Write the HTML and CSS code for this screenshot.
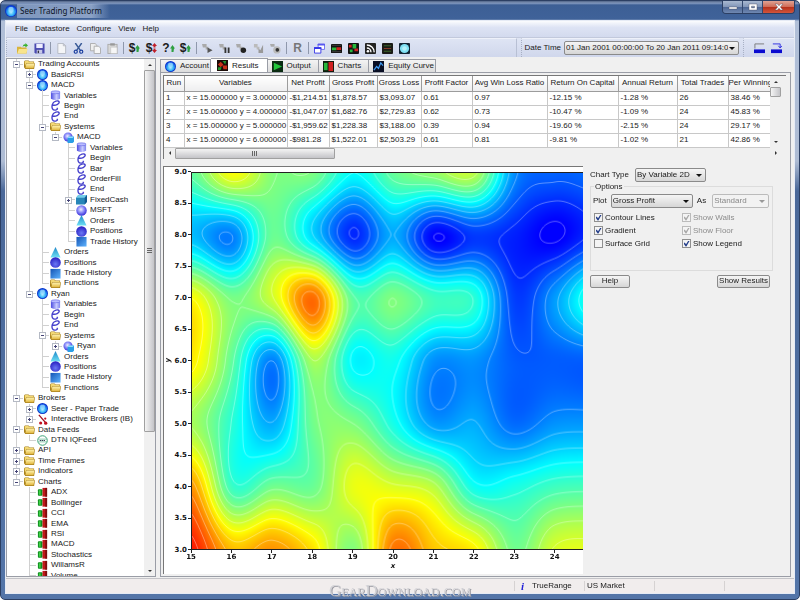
FILE: index.html
```html
<!DOCTYPE html>
<html lang="en">
<head>
    <meta charset="UTF-8">
    <meta name="viewport" content="width=device-width, initial-scale=1.0">
    <title>Seer Trading Platform</title>
    <link rel="stylesheet" href="styles.css">
</head>
<body>

<!-- Icon set -->
<svg width="0" height="0" class="icon-defs" aria-hidden="true">
    <defs>
        <radialGradient id="g-ball" cx="50%" cy="62%" r="60%"><stop offset="0" stop-color="#b4f0ff"/><stop offset=".5" stop-color="#35b4f8"/><stop offset="1" stop-color="#0a3fe0"/></radialGradient>
        <radialGradient id="g-sphere" cx="45%" cy="40%" r="60%"><stop offset="0" stop-color="#eef"/><stop offset=".5" stop-color="#8a8cf8"/><stop offset="1" stop-color="#3a2fd8"/></radialGradient>
        <radialGradient id="g-pos" cx="50%" cy="65%" r="60%"><stop offset="0" stop-color="#6a78f4"/><stop offset="1" stop-color="#2b22c4"/></radialGradient>
        <linearGradient id="g-folder" x1="0" y1="0" x2="0" y2="1"><stop offset="0" stop-color="#fff3b0"/><stop offset="1" stop-color="#e2b840"/></linearGradient>
        <linearGradient id="g-cyl"><stop offset="0" stop-color="#4b4be0"/><stop offset=".6" stop-color="#c9ccff"/><stop offset="1" stop-color="#7f84ee"/></linearGradient>
        <linearGradient id="g-tri" x1="0" y1="0" x2="0" y2="1"><stop offset="0" stop-color="#1c86c8"/><stop offset="1" stop-color="#6fe0f4"/></linearGradient>
        <linearGradient id="g-sq" x1="0" y1="0" x2="1" y2="1"><stop offset="0" stop-color="#1453b4"/><stop offset="1" stop-color="#5fb4ff"/></linearGradient>
    </defs>
    <symbol id="ball" viewBox="0 0 12 12"><circle cx="6" cy="6" r="6" fill="#0b36c8"/><circle cx="6" cy="6" r="5.200" fill="url(#g-ball)"/><rect x="3.500" y="2" width="5" height="5" rx="1.500" fill="#a8e0ff" opacity=".7"/></symbol>
    <symbol id="folder" viewBox="0 0 12 12"><path d="M0 3 1 1.500h4l1 1.200h5V4.500h1L11 10.800H1.400L0 9z" fill="#a8801c"/><path d="M.7 3.200 1.400 2.200h3.300l1 1.200h4.700v1H2.400L1.200 8z" fill="#f3d873"/><path d="M2.600 5h8.800L10.400 10H1.500z" fill="url(#g-folder)"/></symbol>
    <symbol id="cyl" viewBox="0 0 12 12"><path d="M1 2.500v7q5 3 10 0v-7z" fill="url(#g-cyl)"/><ellipse cx="6" cy="2.500" rx="5" ry="1.600" fill="#b9bcff" stroke="#5a5be0" stroke-width=".6"/></symbol>
    <symbol id="script" viewBox="0 0 12 12"><path d="M3 5.500C6 6.500 10.500 4.200 10 2 9.500 0 3.500 1 2.500 5 1.500 9 3 11.500 6 11 8 10.500 8.500 9.400 7.800 9" fill="none" stroke="#4540cc" stroke-width="1.500" stroke-linecap="round"/></symbol>
    <symbol id="system" viewBox="0 0 12 12"><circle cx="5.500" cy="5.500" r="5" fill="url(#g-sphere)"/><path d="M5 6.500 6.500 5H12v5.500L10.500 12H5z" fill="#2a9fe6"/><path d="M5 6.500 6.500 5H12l-1.500 1.500z" fill="#8fdcff"/></symbol>
    <symbol id="cube" viewBox="0 0 12 12"><path d="M0 4 2.500 1H12v7.500L9.500 11.500H0z" fill="#2786b8"/><path d="M0 4 2.500 1H12L9.500 4z" fill="#74cdea"/><path d="M9.500 4 12 1v7.500L9.500 11.500z" fill="#115b90"/></symbol>
    <symbol id="sphere" viewBox="0 0 12 12"><circle cx="6" cy="6" r="5.700" fill="url(#g-sphere)"/></symbol>
    <symbol id="orders" viewBox="0 0 12 12"><path d="M6 0 11.500 11.500H.5z" fill="url(#g-tri)"/></symbol>
    <symbol id="positions" viewBox="0 0 12 12"><circle cx="6" cy="6" r="5.800" fill="url(#g-pos)"/></symbol>
    <symbol id="history" viewBox="0 0 12 12"><rect x=".5" y="1" width="11" height="10.500" fill="url(#g-sq)"/></symbol>
    <symbol id="bars" viewBox="0 0 12 12"><rect x="1" y="2.500" width="5" height="7" rx="1" fill="#0c8a1c"/><rect x="2" y="3.500" width="2" height="5" fill="#3fd046"/><rect x="6" y="1" width="5" height="9.500" fill="#c01818"/><rect x="9" y="1" width="2" height="9.500" fill="#7c0c0c"/></symbol>
    <symbol id="ib" viewBox="0 0 12 12"><path d="M2 1 9 9" stroke="#a01020" stroke-width="1.300"/><circle cx="9.500" cy="10" r="1.800" fill="#c01020"/><circle cx="4" cy="9.800" r="1.700" fill="#c01020"/><circle cx="9" cy="5" r="1.200" fill="#c01020"/></symbol>
    <symbol id="dtn" viewBox="0 0 12 12"><circle cx="6" cy="6" r="5.200" fill="#fff" stroke="#2c9a6c"/><path d="M1.500 4.500h9M1.500 7.500h9" stroke="#2c9a6c" stroke-width=".6"/><path d="M3 6h6" stroke="#345" stroke-width="1.200" stroke-dasharray="1.500 .6"/></symbol>

    <symbol id="open" viewBox="0 0 12 12"><path d="M0 4h4l1 1h5.500v6.500H0z" fill="#d9b43c"/><path d="M2 6.500h9.800L10 11.500H.3z" fill="#f8e48c"/><path d="M6 4q1-3 3.200-2.500V0L12 2.800 9.200 5V3.500Q7.500 3 6 4z" fill="#39b02e"/></symbol>
    <symbol id="save" viewBox="0 0 12 12"><path d="M.5.500h11v11h-10l-1-1z" fill="#4a4ab0"/><rect x="2.500" y="1" width="7" height="4.500" fill="#eef"/><rect x="3" y="7.500" width="6" height="4" fill="#c8cae8"/><rect x="4" y="8.300" width="1.500" height="2.700" fill="#334"/></symbol>
    <symbol id="new" viewBox="0 0 12 12"><path d="M2 .5h6l2.500 2.500v8.500H2z" fill="#f4f5f7" stroke="#b4b8c2"/><path d="M8 .5v2.500h2.500" fill="none" stroke="#b4b8c2"/></symbol>
    <symbol id="cut" viewBox="0 0 12 12"><path d="M2.500 0 8 8M9.500 0 4 8" stroke="#3b5c98" stroke-width="1.600"/><circle cx="3" cy="9.500" r="1.700" fill="none" stroke="#1c3fa0" stroke-width="1.300"/><circle cx="9" cy="9.500" r="1.700" fill="none" stroke="#1c3fa0" stroke-width="1.300"/></symbol>
    <symbol id="copy" viewBox="0 0 12 12"><path d="M.5.500h5l2 2v6h-7z" fill="#eee" stroke="#aaa"/><path d="M4.500 3.500h5l2 2v6h-7z" fill="#f6f6f6" stroke="#aaa"/></symbol>
    <symbol id="paste" viewBox="0 0 12 12"><rect x="1" y="1.500" width="10" height="10" fill="#d8d8d8" stroke="#aaa"/><rect x="3.500" y=".3" width="5" height="2.500" fill="#999"/><path d="M4 4.500h7v7H4z" fill="#f6f6f6" stroke="#bbb" stroke-width=".6"/></symbol>
    <symbol id="up" viewBox="0 0 5 10"><path d="M1.500 9V5.500H0L2.500 2 5 5.500H4L3.500 9z" fill="#2fa042"/></symbol>
    <symbol id="updown" viewBox="0 0 5 10"><path d="M2.500 0 5 3H3.500v1.500H1.500V3H0zM2.500 10 0 7h1.500V5.500h2V7H5z" fill="#c0202a"/></symbol>
    <symbol id="run" viewBox="0 0 12 12"><path d="M0 1h5v3h2v3H4V5H1z" fill="#aaa"/><path d="M6 5l5.500 3L6 11z" fill="#555"/></symbol>
    <symbol id="pause" viewBox="0 0 12 12"><path d="M0 1h5v3h2v3H4V5H1z" fill="#aaa"/><path d="M6 5h2v6H6zM9.500 5h2v6h-2z" fill="#333"/></symbol>
    <symbol id="record" viewBox="0 0 12 12"><path d="M0 1h5v3h2v3H4V5H1z" fill="#aaa"/><circle cx="8" cy="8" r="3" fill="#222"/></symbol>
    <symbol id="edit" viewBox="0 0 12 12"><path d="M1 1h4v3h2v3H4V5H1z" fill="#bbb"/><path d="M6 11V6l2 2 3-6v9z" fill="#999"/></symbol>
    <symbol id="gear" viewBox="0 0 12 12"><path d="M0 1h5v3H1z" fill="#aaa"/><circle cx="7.500" cy="7.500" r="4" fill="#bbb"/><circle cx="8" cy="7.500" r="2" fill="#333"/></symbol>
    <symbol id="windows" viewBox="0 0 12 12"><path d="M4.500 1h7v6h-7z" fill="#fff" stroke="#6a6af0"/><path d="M4 1h8v1.600H4z" fill="#5858f0"/><path d="M.5 5h7v6h-7z" fill="#fff" stroke="#3434e8"/><path d="M0 4.500h8V6.500H0z" fill="#3434e8"/></symbol>
    <symbol id="t-orders" viewBox="0 0 12 12"><rect y="1" width="12" height="10" rx="1" fill="#111"/><path d="M1 5h5v3H1z" fill="#27b83a"/><path d="M6 4.500h5v3H6z" fill="#d02222"/><path d="M1 2.500h10M1 9.500h10" stroke="#444"/></symbol>
    <symbol id="t-heat" viewBox="0 0 12 12"><rect width="12" height="12" rx="1" fill="#111"/><path d="M1 2h3v3H1zM7 6h4v3H7z" fill="#d02222"/><path d="M5 1h4v5H5zM2 7h3v3H2z" fill="#27b83a"/></symbol>
    <symbol id="t-feed" viewBox="0 0 12 12"><rect width="12" height="12" rx="1" fill="#222"/><circle cx="3.200" cy="9" r="1.400" fill="#fff"/><path d="M2 5.500A4.500 4.500 0 0 1 6.500 10M2 2.200A8 8 0 0 1 10 10" fill="none" stroke="#fff" stroke-width="1.500"/></symbol>
    <symbol id="t-list" viewBox="0 0 12 12"><rect width="12" height="12" rx="1" fill="#1a1a16"/><path d="M2 3h8M2 9h8" stroke="#3c6c2c"/><path d="M2 6h8" stroke="#8c3c2c"/></symbol>
    <symbol id="t-globe" viewBox="0 0 12 12"><rect width="12" height="12" rx="1" fill="#123"/><circle cx="6" cy="6" r="5" fill="#7fe0f4"/><circle cx="6" cy="6" r="2.500" fill="#b4f0fa"/></symbol>
    <symbol id="t-results" viewBox="0 0 12 12"><rect width="12" height="12" fill="#1c0c08"/><path d="M1 5 4 2l3 3-3 3zM6 6h5v4H7z" fill="#c8321c"/><path d="M6 1h4l-1 4zM1 8h4l-1 3H1z" fill="#22962e"/></symbol>
    <symbol id="t-output" viewBox="0 0 12 12"><rect width="12" height="12" fill="#0b2c12"/><path d="M2 2l9 4-9 4z" fill="#22c63a"/></symbol>
    <symbol id="t-charts" viewBox="0 0 12 12"><rect width="12" height="12" fill="#0b1c0c"/><rect x="1" y="2" width="4" height="8" fill="#27b83a"/><rect x="6" y="1" width="5" height="10" fill="#d02020"/></symbol>
    <symbol id="t-equity" viewBox="0 0 12 12"><rect width="12" height="12" fill="#0a0f24"/><path d="M1 10 4 6l2 2 2.500-6L11 5" fill="none" stroke="#3f9cf4" stroke-width="1.300"/></symbol>
    <symbol id="dock-down" viewBox="0 0 12 12"><path d="M1 6V1h10" fill="none" stroke="#777"/><rect x="0" y="7" width="12" height="4" fill="#0a0ad0"/></symbol>
    <symbol id="dock-right" viewBox="0 0 12 12"><path d="M2 1h8v4M8 3l2 2.500L12 3" fill="none" stroke="#2a2ae0"/><rect x="0" y="7" width="12" height="4" fill="#0a0ad0"/></symbol>
</svg>

<div class="window">
    <header class="title-bar">
        <svg class="app-icon"><use href="#ball"/></svg>
        <h1>Seer Trading Platform</h1>
        <div class="window-buttons">
            <button aria-label="Minimize"><svg viewBox="0 0 10 8"><path d="M1 4h8v2H1z"/></svg></button>
            <button aria-label="Maximize"><svg viewBox="0 0 10 8"><path d="M1 1h8v6H1zM3.500 3.200v1.600h3V3.200z" fill-rule="evenodd"/></svg></button>
            <button class="close" aria-label="Close"><svg viewBox="0 0 10 8"><path d="M1 1h2.500L5 2.800 6.500 1H9L6.300 4 9 7H6.500L5 5.200 3.500 7H1l2.700-3z"/></svg></button>
        </div>
    </header>

    <div class="client">
        <nav class="menu-bar">
            <a href="#">File</a>
            <a href="#">Datastore</a>
            <a href="#">Configure</a>
            <a href="#">View</a>
            <a href="#">Help</a>
        </nav>

        <div class="toolbar">
            <div class="tools">
                <button aria-label="Open"><svg><use href="#open"/></svg></button>
                <button aria-label="Save"><svg><use href="#save"/></svg></button>
                <span class="sep"></span>
                <button aria-label="New"><svg><use href="#new"/></svg></button>
                <button aria-label="Cut"><svg><use href="#cut"/></svg></button>
                <button aria-label="Copy"><svg><use href="#copy"/></svg></button>
                <button aria-label="Paste"><svg><use href="#paste"/></svg></button>
                <span class="sep"></span>
                <button class="glyph">$<svg><use href="#up"/></svg></button>
                <button class="glyph">$<svg><use href="#updown"/></svg></button>
                <button class="glyph">?<svg><use href="#up"/></svg></button>
                <button class="glyph">$<svg><use href="#up"/></svg></button>
                <span class="sep"></span>
                <button aria-label="Run"><svg><use href="#run"/></svg></button>
                <button aria-label="Pause"><svg><use href="#pause"/></svg></button>
                <button aria-label="Stop"><svg><use href="#record"/></svg></button>
                <button aria-label="Edit"><svg><use href="#edit"/></svg></button>
                <button aria-label="Settings"><svg><use href="#gear"/></svg></button>
                <span class="sep"></span>
                <button class="glyph grey">R</button>
                <span class="sep"></span>
                <button aria-label="Windows"><svg><use href="#windows"/></svg></button>
                <button aria-label="Order book"><svg><use href="#t-orders"/></svg></button>
                <button aria-label="Heat map"><svg><use href="#t-heat"/></svg></button>
                <button aria-label="Feed"><svg><use href="#t-feed"/></svg></button>
                <button aria-label="Watch list"><svg><use href="#t-list"/></svg></button>
                <button aria-label="Web"><svg><use href="#t-globe"/></svg></button>
            </div>
            <div class="tools dates">
                <label for="date-range">Date Time</label>
                <span class="select"><select id="date-range"><option>01 Jan 2001 00:00:00 To 20 Jan 2011 09:14:00</option></select></span>
            </div>
            <div class="tools dock">
                <button aria-label="Dock below"><svg><use href="#dock-down"/></svg></button>
                <button aria-label="Dock right"><svg><use href="#dock-right"/></svg></button>
            </div>
        </div>

        <main class="workspace">
            <aside class="tree-panel">
                <ul class="tree" id="tree"></ul>
                <div class="scroll-v">
                    <span class="arrow up"></span>
                    <span class="thumb grip"></span>
                    <span class="rest"></span>
                    <span class="arrow down"></span>
                </div>
            </aside>

            <section class="content">
                <div class="tabs">
                    <button><svg><use href="#ball"/></svg>Account</button>
                    <button class="active"><svg><use href="#t-results"/></svg>Results</button>
                    <button><svg><use href="#t-output"/></svg>Output</button>
                    <button><svg><use href="#t-charts"/></svg>Charts</button>
                    <button><svg><use href="#t-equity"/></svg>Equity Curve</button>
                </div>

                <div class="page">
                    <div class="results">
                        <div class="results-top">
                            <div class="table-clip">
                                <table>
                                    <colgroup>
                                        <col class="c-run"><col class="c-var"><col class="c-net"><col class="c-gp"><col class="c-gl"><col class="c-pf"><col class="c-avg"><col class="c-roc"><col class="c-ann"><col class="c-tot"><col>
                                    </colgroup>
                                    <thead>
                                        <tr><th>Run</th><th>Variables</th><th>Net Profit</th><th>Gross Profit</th><th>Gross Loss</th><th>Profit Factor</th><th>Avg Win Loss Ratio</th><th>Return On Capital</th><th>Annual Return</th><th>Total Trades</th><th>Per Winning</th></tr>
                                    </thead>
                                    <tbody>
                                        <tr><td>1</td><td>x = 15.000000 y = 3.000000</td><td>-$1,214.51</td><td>$1,878.57</td><td>$3,093.07</td><td>0.61</td><td>0.97</td><td>-12.15 %</td><td>-1.28 %</td><td>26</td><td>38.46 %</td></tr>
                                        <tr><td>2</td><td>x = 15.000000 y = 4.000000</td><td>-$1,047.07</td><td>$1,682.76</td><td>$2,729.83</td><td>0.62</td><td>0.73</td><td>-10.47 %</td><td>-1.09 %</td><td>24</td><td>45.83 %</td></tr>
                                        <tr><td>3</td><td>x = 15.000000 y = 5.000000</td><td>-$1,959.62</td><td>$1,228.38</td><td>$3,188.00</td><td>0.39</td><td>0.94</td><td>-19.60 %</td><td>-2.15 %</td><td>24</td><td>29.17 %</td></tr>
                                        <tr><td>4</td><td>x = 15.000000 y = 6.000000</td><td>-$981.28</td><td>$1,522.01</td><td>$2,503.29</td><td>0.61</td><td>0.81</td><td>-9.81 %</td><td>-1.02 %</td><td>21</td><td>42.86 %</td></tr>
                                    </tbody>
                                </table>
                            </div>
                            <div class="scroll-v">
                                <span class="arrow up"></span>
                                <span class="thumb"></span>
                                <span class="rest"></span>
                                <span class="arrow down"></span>
                            </div>
                        </div>
                        <div class="scroll-h">
                            <span class="arrow left"></span>
                            <span class="thumb grip"></span>
                            <span class="rest"></span>
                            <span class="arrow right"></span>
                        </div>
                    </div>

                    <div class="lower">
                        <div class="chart">
                            <div class="y-title">y</div>
                            <div class="y-axis" id="y-axis"></div>
                            <canvas id="plot" width="392" height="378"></canvas>
                            <div class="x-axis" id="x-axis"></div>
                            <div class="x-title">x</div>
                        </div>

                        <form class="options">
                            <div class="line">
                                <label for="chart-type">Chart Type</label>
                                <span class="select type"><select id="chart-type"><option>By Variable 2D</option></select></span>
                            </div>
                            <fieldset>
                                <legend>Options</legend>
                                <div class="line">
                                    <label for="plot-field">Plot</label>
                                    <span class="select field"><select id="plot-field"><option>Gross Profit</option></select></span>
                                    <label for="plot-as">As</label>
                                    <span class="select as"><select id="plot-as" disabled><option>Standard</option></select></span>
                                </div>
                                <div class="checks">
                                    <label><input type="checkbox" checked>Contour Lines</label>
                                    <label class="off"><input type="checkbox" checked disabled>Show Walls</label>
                                    <label><input type="checkbox" checked>Gradient</label>
                                    <label class="off"><input type="checkbox" checked disabled>Show Floor</label>
                                    <label><input type="checkbox">Surface Grid</label>
                                    <label><input type="checkbox" checked>Show Legend</label>
                                </div>
                            </fieldset>
                            <div class="actions">
                                <button type="button">Help</button>
                                <button type="button">Show Results</button>
                            </div>
                        </form>
                    </div>
                </div>
            </section>
        </main>

        <footer class="status-bar">
            <span class="info"><b>i</b>TrueRange</span>
            <span class="market">US Market</span>
            <span class="blank"></span>
            <span class="blank"></span>
        </footer>
    </div>
    <div class="watermark">GearDownload.com</div>
</div>

<script src="script.js"></script>
</body>
</html>
```
FILE: styles.css
```css
* {
    box-sizing: border-box;
}

body {
    margin: 0;
    background: #fff;
    font-family: "Liberation Sans", Arial, sans-serif;
    font-size: 8px;
    line-height: 10px;
    color: #1a1a1a;
}

button, select, input {
    font: inherit;
    color: inherit;
    margin: 0;
    padding: 0;
}

button {
    border: none;
    background: none;
}

.icon-defs {
    position: absolute;
}

/* Window frame */
.window {
    position: relative;
    display: flex;
    flex-direction: column;
    height: 100vh;
    padding: 0 4px 5px;
    overflow: hidden;
    background: linear-gradient(#5d7194 0, #5d7194 1px, #8a9fc4 2px, #3d5f95 4px, #3f6299 18px, #b0bfd8 20px, #aebcd4 160px, #4a6899 190px, #5475a8 100%);
    border: 1px solid #2c3f63;
    border-radius: 5px;
}

.title-bar {
    display: flex;
    align-items: center;
    height: 19px;
    flex: none;
}

.app-icon {
    width: 12px;
    height: 12px;
}

.title-bar h1 {
    margin: 0;
    padding: 0 8px 0 3px;
    font: 8px/14px "Noto Sans", sans-serif;
    color: #0c1424;
    background: linear-gradient(90deg, rgba(190, 204, 228, .5), rgba(190, 204, 228, .6) 80%, transparent);
}

.window-buttons {
    display: flex;
    align-self: flex-start;
    margin-left: auto;
    border: 1px solid #2c3f63;
    border-top: none;
    border-radius: 0 0 4px 4px;
    overflow: hidden;
}

.window-buttons button {
    width: 20px;
    height: 12px;
    background: linear-gradient(#a9b8d0, #8195b8 50%, #4d6694 51%, #6f88b2);
    border-right: 1px solid #33486e;
}

.window-buttons .close {
    width: 31px;
    background: linear-gradient(#e0a393, #cf6a55 50%, #b5301a 51%, #d2553c);
    border: none;
}

.window-buttons svg {
    display: block;
    width: 10px;
    height: 8px;
    margin: auto;
    fill: #fff;
    stroke: #445;
    stroke-width: .4;
}

.client {
    flex: 1;
    min-height: 0;
    display: flex;
    flex-direction: column;
    background: #f0f0f0;
    border: 1px solid #e6ebf5;
}

/* Menu and toolbar */
.menu-bar {
    display: flex;
    gap: 7px;
    height: 17px;
    flex: none;
    align-items: center;
    padding-left: 9px;
    background: linear-gradient(#fbfcfe, #dde3f4 40%, #d3daee);
    border-bottom: 1px solid #c2c9dc;
}

.menu-bar a {
    color: #1a1a1a;
    text-decoration: none;
}

.toolbar {
    display: flex;
    height: 19px;
    flex: none;
    background: linear-gradient(#dfe5f4, #d0d7ec);
    gap: 4px;
}

.tools {
    display: flex;
    align-items: center;
    padding-left: 7px;
    border-left: 1px dotted #a8b0c4;
    border-top: 1px solid #eef1fa;
}

.tools:first-child {
    flex: 1;
    padding-left: 7px;
    border-right: 1px solid #b8c0d4;
}

.tools button {
    width: 17px;
    height: 16px;
    display: flex;
    align-items: center;
    justify-content: center;
}

.tools svg {
    width: 11px;
    height: 11px;
}

.tools .glyph {
    font: bold 12px/12px "Liberation Sans", sans-serif;
}

.tools .glyph svg {
    width: 5px;
    height: 10px;
}

.tools .grey {
    color: #777;
}

.sep {
    width: 1px;
    height: 12px;
    margin: 0 2px;
    background: #8f98ac;
}

.dates {
    gap: 3px;
    padding-left: 3px;
}

.dates .select {
    width: 175px;
}

.dates select {
    padding-right: 10px;
}

.dock {
    width: 51px;
}

/* Drop-downs */
.select {
    position: relative;
    display: block;
}

.select select {
    display: block;
    width: 100%;
    height: 14px;
    padding: 0 10px 0 1px;
    appearance: none;
    white-space: nowrap;
    background: linear-gradient(#f5f5f5, #e6e6e6 50%, #d6d6d6);
    border: 1px solid #8a8a8a;
    border-radius: 2px;
}

.select::after {
    content: "";
    position: absolute;
    right: 4px;
    top: 6px;
    border: 3px solid transparent;
    border-top-color: #111;
    border-bottom: none;
    pointer-events: none;
}

.select select:disabled {
    color: #888;
    background: #f2f2f2;
    border-color: #bbb;
    opacity: 1;
}

.select.as::after {
    border-top-color: #999;
}

/* Tree */
.workspace {
    flex: 1;
    min-height: 0;
    display: flex;
    gap: 4px;
    padding: 1px 0;
}

.tree-panel {
    display: flex;
    width: 150px;
    flex: none;
    background: #fff;
    border: 1px solid #9a9da6;
    overflow: hidden;
}

.tree {
    flex: 1;
    min-width: 0;
    list-style: none;
    margin: 0 0 -5px;
    padding: 0 0 0 3px;
    display: grid;
    grid-auto-rows: minmax(0, 1fr);
}

.tree li {
    display: flex;
    align-items: center;
    white-space: nowrap;
}

.tree i {
    position: relative;
    align-self: stretch;
    width: 13px;
    flex: none;
}

.tree i.pass {
    background: linear-gradient(#d0d0d0, #d0d0d0) 6px 0 / 1px 100% no-repeat;
}

.tree i.tee {
    background: linear-gradient(#d0d0d0, #d0d0d0) 6px 0 / 1px 100% no-repeat, linear-gradient(#d0d0d0, #d0d0d0) 6px 50% / 7px 1px no-repeat;
}

.tree i.end {
    background: linear-gradient(#d0d0d0, #d0d0d0) 6px 0 / 1px 50% no-repeat, linear-gradient(#d0d0d0, #d0d0d0) 6px 50% / 7px 1px no-repeat;
}

.tree .toggle {
    position: absolute;
    left: 3px;
    top: 2px;
    width: 7px;
    height: 7px;
    border: 1px solid #b4b9c4;
    background: linear-gradient(#447, #447) center / 3px 1px no-repeat, #fff;
}

.tree .toggle.closed {
    background: linear-gradient(#447, #447) center / 3px 1px no-repeat, linear-gradient(#447, #447) center / 1px 3px no-repeat, #fff;
}

.tree svg {
    width: 11px;
    height: 11px;
    flex: none;
    margin: 0 3px 0 1px;
}

/* Scroll bars */
.scroll-v, .scroll-h {
    display: flex;
    flex: none;
    background: #f0f0f0;
}

.scroll-v {
    flex-direction: column;
    width: 11px;
}

.scroll-h {
    height: 11px;
}

.arrow {
    width: 11px;
    height: 11px;
    display: grid;
    place-items: center;
}

.arrow::before {
    content: "";
    border: 2px solid transparent;
}

.arrow.up::before { border-bottom-color: #333; border-top: none; }
.arrow.down::before { border-top-color: #333; border-bottom: none; }
.arrow.left::before { border-right-color: #333; border-left: none; }
.arrow.right::before { border-left-color: #333; border-right: none; }

.thumb {
    display: grid;
    place-items: center;
    border: 1px solid #a0a0a0;
    border-radius: 1px;
    background: linear-gradient(90deg, #f4f4f4, #dcdcde 50%, #c4c4c8);
}

.scroll-h .thumb {
    background: linear-gradient(#f4f4f4, #dcdcde 50%, #c4c4c8);
    flex: 156;
}

.scroll-h .rest {
    flex: 430;
}

.tree-panel .thumb {
    flex: 362;
}

.tree-panel .rest {
    flex: 134;
}

.results .scroll-v .thumb {
    height: 10px;
}

.results .scroll-v .rest {
    flex: 1;
}

.grip::before {
    content: "";
    width: 5px;
    height: 5px;
    background: repeating-linear-gradient(#666 0, #666 1px, transparent 1px, transparent 2px);
}

.scroll-h .grip::before {
    background: repeating-linear-gradient(90deg, #666 0, #666 1px, transparent 1px, transparent 2px);
}

/* Tabs */
.content {
    flex: 1;
    min-width: 0;
    display: flex;
    flex-direction: column;
}

.tabs {
    display: flex;
    align-items: flex-end;
    height: 14px;
    flex: none;
}

.tabs button {
    display: flex;
    align-items: center;
    gap: 4px;
    height: 13px;
    padding: 0 1px 0 4px;
    background: linear-gradient(#f4f4f4, #dcdcdc);
    border: 1px solid #9a9da6;
    border-bottom: none;
    border-left: none;
    white-space: nowrap;
}

.tabs button:first-child {
    border-left: 1px solid #9a9da6;
}

.tabs button.active {
    height: 14px;
    padding: 0 8px 0 6px;
    background: #fff;
}

.tabs button:nth-child(3), .tabs button:nth-child(4) {
    padding-right: 7px;
}

.tabs svg {
    width: 11px;
    height: 11px;
}

.page {
    flex: 1;
    min-height: 0;
    display: flex;
    flex-direction: column;
    gap: 7px;
    padding: 2px 4px 2px 2px;
    margin-right: 3px;
    border: 1px solid #9a9da6;
}

/* Results table */
.results {
    padding-right: 5px;
    border-top: 1px solid #777;
    border-left: 1px solid #777;
}

.results-top {
    display: flex;
    background: #fff;
}

.table-clip {
    flex: 1;
    min-width: 0;
    overflow: hidden;
}

table {
    width: 100%;
    table-layout: fixed;
    border-collapse: collapse;
}

th, td {
    padding: 0 1px 0 2px;
    white-space: nowrap;
    overflow: hidden;
    border-right: 1px solid #c8c8c8;
    border-bottom: 1px solid #c8c8c8;
    text-align: left;
    font-weight: normal;
    height: 14px;
}

th {
    height: 15px;
    padding: 0;
    text-align: center;
    background: linear-gradient(#fff, #eeeeef);
    border-color: #9c9c9c;
}

th:last-child, td:last-child {
    border-right: none;
}

.c-run { width: 20px; }
.c-var { width: 103px; }
.c-net { width: 42px; }
.c-gp { width: 48px; }
.c-gl { width: 44px; }
.c-pf { width: 51px; }
.c-avg { width: 75px; }
.c-roc { width: 71px; }
.c-ann { width: 59px; }
.c-tot { width: 51px; }

/* Contour chart */
.lower {
    flex: 1;
    min-height: 0;
    display: flex;
    gap: 7px;
}

.chart {
    flex: 1;
    min-width: 0;
    display: grid;
    grid-template-columns: 5px 22px 1fr;
    grid-template-rows: 1fr 12px 12px;
    padding: 5px 0 0;
    background: #fff;
    border-top: 1px solid #777;
    border-left: 1px solid #777;
    font: bold 7px/8px "DejaVu Sans", sans-serif;
    color: #111;
}

.chart canvas {
    width: 100%;
    height: 100%;
    min-height: 0;
    border-left: 1px solid #222;
    border-top: 1px solid #222;
    border-bottom: 1px solid #222;
}

.y-title {
    align-self: center;
    font-style: italic;
    writing-mode: vertical-rl;
    transform: rotate(180deg);
}

.x-title {
    grid-column: 3;
    padding-left: 12px;
    text-align: center;
    font-style: italic;
}

.y-axis {
    display: flex;
    flex-direction: column;
    justify-content: space-between;
    margin: -4px 0;
}

.y-axis span {
    display: flex;
    align-items: center;
    justify-content: flex-end;
    gap: 1px;
}

.y-axis span::after {
    content: "";
    width: 3px;
    height: 1px;
    background: #222;
}

.x-axis {
    grid-column: 3;
    display: grid;
    grid-template-columns: repeat(9, 100fr) 70fr;
}

.x-axis span {
    width: 0;
    display: flex;
    flex-direction: column;
    align-items: center;
}

.x-axis span::before {
    content: "";
    width: 1px;
    height: 3px;
    background: #222;
}

/* Chart options */
.options {
    width: 196px;
    flex: none;
    padding-top: 2px;
}

.line {
    display: flex;
    align-items: center;
    gap: 4px;
}

.select.type { width: 71px; margin-left: 2px; }
.select.field { width: 82px; }
.select.as { width: 57px; margin-left: 2px; }

fieldset {
    width: 183px;
    height: 89px;
    margin: 0;
    padding: 2px 2px 0;
    border: 1px solid #dcdcdc;
    min-width: 0;
}

legend {
    margin-left: 1px;
    padding: 0 1px;
}

.checks {
    display: grid;
    grid-template-columns: 88px 1fr;
    row-gap: 3px;
    margin-top: 5px;
    padding-left: 1px;
}

.checks label {
    display: flex;
    align-items: center;
    gap: 2px;
}

.checks .off {
    color: #8c8c8c;
}

.checks input {
    appearance: none;
    width: 9px;
    height: 9px;
    background: #f4f4f4;
    border: 1px solid #8f8f8f;
    display: grid;
    place-items: center;
}

.checks input:checked::before {
    content: "";
    width: 6px;
    height: 6px;
    background: #27418c;
    clip-path: polygon(0 50%, 20% 35%, 42% 62%, 82% 0, 100% 10%, 48% 100%, 36% 100%);
}

.checks input:disabled {
    border-color: #bbb;
}

.checks input:disabled::before {
    background: #aaa;
}

.actions {
    display: flex;
    justify-content: space-between;
    width: 180px;
    margin-top: 4px;
}

.actions button {
    min-width: 40px;
    height: 13px;
    padding: 0 1px;
    background: linear-gradient(#f5f5f5, #e6e6e6 50%, #d6d6d6);
    border: 1px solid #8a8a8a;
    border-radius: 2px;
}

/* Status bar */
.status-bar {
    display: flex;
    align-items: center;
    justify-content: flex-end;
    height: 15px;
    flex: none;
    background: #f1eded;
    border-top: 1px solid #c4c4c8;
}

.status-bar span {
    display: flex;
    align-items: center;
    height: 10px;
    padding-left: 2px;
    border-left: 1px solid #d6d2d2;
}

.status-bar .info { width: 70px; }
.status-bar .market { width: 70px; }
.status-bar .blank { width: 70px; }

.status-bar b {
    font: italic bold 11px/10px "Liberation Serif", serif;
    color: #2222d8;
    margin: 0 8px 0 4px;
}

.watermark {
    position: absolute;
    left: 0;
    right: 0;
    bottom: 0;
    text-align: center;
    font: small-caps 17px/16px "Liberation Serif", serif;
    color: #d2d2d6;
    text-shadow: 1px 1px 0 #9a9aa2;
}
```
FILE: script.js
```js
// Tree nodes: [icon, label, children or true when collapsed]
const vars = [['cyl', 'Variables'], ['script', 'Begin']];
const book = [['orders', 'Orders'], ['positions', 'Positions'], ['history', 'Trade History']];

const nodes = [
    ['folder', 'Trading Accounts', [
        ['ball', 'BasicRSI', true],
        ['ball', 'MACD', [
            ...vars, ['script', 'End'],
            ['folder', 'Systems', [
                ['system', 'MACD', [
                    ...vars, ['script', 'Bar'], ['script', 'OrderFill'], ['script', 'End'],
                    ['cube', 'FixedCash', true], ['sphere', 'MSFT'], ...book
                ]]
            ]],
            ...book, ['folder', 'Functions']
        ]],
        ['ball', 'Ryan', [
            ...vars, ['script', 'End'],
            ['folder', 'Systems', [['system', 'Ryan', true]]],
            ...book, ['folder', 'Functions']
        ]]
    ]],
    ['folder', 'Brokers', [['ball', 'Seer - Paper Trade', true], ['ib', 'Interactive Brokers (IB)', true]]],
    ['folder', 'Data Feeds', [['dtn', 'DTN IQFeed']]],
    ['folder', 'API', true],
    ['folder', 'Time Frames', true],
    ['folder', 'Indicators', true],
    ['folder', 'Charts', ['ADX', 'Bollinger', 'CCI', 'EMA', 'RSI', 'MACD', 'Stochastics', 'WillamsR', 'Volume'].map(n => ['bars', n])]
];

function renderTree(list, guides) {
    return list.map(([icon, label, kids], i) => {
        const last = i === list.length - 1 && label !== 'Volume';
        const toggle = kids ? `<span class="toggle${kids === true ? ' closed' : ''}"></span>` : '';
        const row = `<li>${guides}<i class="${last ? 'end' : 'tee'}">${toggle}</i><svg><use href="#${icon}"/></svg>${label}</li>`;
        const sub = Array.isArray(kids) ? renderTree(kids, guides + `<i class="${last ? '' : 'pass'}"></i>`) : '';
        return row + sub;
    }).join('');
}

document.getElementById('tree').innerHTML = renderTree(nodes, '');

// Axis labels
for (let y = 9; y >= 3; y -= 0.5) {
    document.getElementById('y-axis').innerHTML += `<span>${y.toFixed(1)}</span>`;
}
for (let x = 15; x <= 24; x++) {
    document.getElementById('x-axis').innerHTML += `<span>${x}</span>`;
}

// Gross profit per run, scaled to 0..3; columns are x = 15..25, rows are y = 9..3
const grid = [
    [1.38, 1.98, 1.52, 1.48, 1.00, 1.40, 1.58, 1.72, 0.55, 0.38, 0.42],
    [0.74, 0.50, 1.42, 0.84, 0.15, 0.67, 0.00, 0.22, 0.12, -0.03, 0.20],
    [2.00, 1.48, 1.82, 2.58, 1.36, 1.50, 1.25, 1.15, 0.24, 0.62, 1.20],
    [2.06, 1.36, 0.50, 1.66, 0.97, 1.05, 0.56, 0.57, 0.36, 0.36, 0.36],
    [1.65, 1.15, 0.68, 1.45, 1.50, 1.08, 0.61, 0.68, 0.42, 0.58, 0.60],
    [2.40, 1.22, 1.45, 1.42, 1.92, 1.86, 1.72, 1.05, 1.10, 1.25, 1.28],
    [2.90, 2.26, 2.42, 2.10, 1.52, 2.55, 2.22, 2.05, 1.45, 1.85, 1.90]
];

function cubic(a, b, c, d, t) {
    return b + 0.5 * t * (c - a + t * (2 * a - 5 * b + 4 * c - d + t * (3 * (b - c) + d - a)));
}

function sample(gx, gy) {
    const ix = Math.floor(gx), iy = Math.floor(gy);
    const clamp = (v, max) => Math.max(0, Math.min(max, v));
    const rows = [-1, 0, 1, 2].map(r => {
        const row = grid[clamp(iy + r, 6)];
        return cubic(...[-1, 0, 1, 2].map(c => row[clamp(ix + c, 10)]), gx - ix);
    });
    return cubic(...rows, gy - iy);
}

// Blue - cyan - yellow - red ramp
function colour(v) {
    v = Math.max(0, Math.min(3, v));
    if (v < 1) return [0, 255 * v, 255];
    if (v < 2) return [255 * (v - 1), 255, 255 * (2 - v)];
    return [255, 255 * (3 - v), 0];
}

const canvas = document.getElementById('plot');
const ctx = canvas.getContext('2d');
const w = canvas.width, h = canvas.height;
const field = [];
const image = ctx.createImageData(w, h);

for (let y = 0; y <= h; y++) {
    field.push([]);
    for (let x = 0; x <= w; x++) {
        const v = sample(x / w * 9.7, y / h * 6);
        field[y].push(v);
        if (x < w && y < h) {
            image.data.set([...colour(v), 255], (y * w + x) * 4);
        }
    }
}
ctx.putImageData(image, 0, 0);

// Contour lines by marching squares
ctx.strokeStyle = 'rgba(255, 255, 255, 0.45)';
ctx.lineWidth = 0.8;
const step = 2;
for (let n = 0; n < 18; n++) {
    const level = n / 6;
    ctx.beginPath();
    for (let y = 0; y + step <= h; y += step) {
        for (let x = 0; x + step <= w; x += step) {
            const c = [[x, y], [x + step, y], [x + step, y + step], [x, y + step]];
            const hits = [];
            for (let i = 0; i < 4; i++) {
                const p = c[i], q = c[(i + 1) % 4];
                const a = field[p[1]][p[0]] - level, b = field[q[1]][q[0]] - level;
                if (a < 0 !== b < 0) {
                    const t = a / (a - b);
                    hits.push([p[0] + (q[0] - p[0]) * t, p[1] + (q[1] - p[1]) * t]);
                }
            }
            for (let i = 0; i + 1 < hits.length; i += 2) {
                ctx.moveTo(...hits[i]);
                ctx.lineTo(...hits[i + 1]);
            }
        }
    }
    ctx.stroke();
}
```
